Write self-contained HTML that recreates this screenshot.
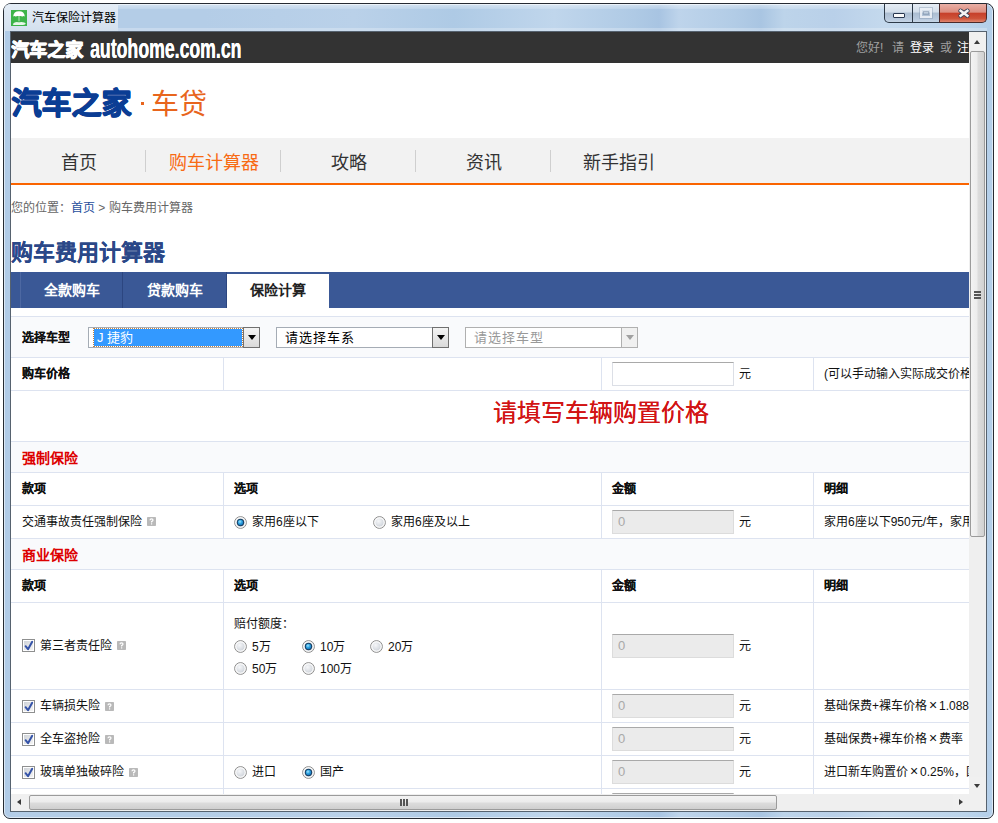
<!DOCTYPE html>
<html lang="zh-CN"><head><meta charset="utf-8">
<style>
*{box-sizing:border-box}
html,body{margin:0;padding:0}
body{width:998px;height:823px;position:relative;overflow:hidden;background:#fff;font-family:"Liberation Sans",sans-serif;font-size:12px;color:#111}
.a{position:absolute;white-space:nowrap}
#frame{position:absolute;left:3px;top:3px;width:991px;height:816px;border:1px solid #262b33;border-radius:8px 8px 7px 7px;
 background:linear-gradient(90deg,#afcae6 0px,#b4cde7 12px,#b4cde7 200px,#bad1e9 350px,#aecae5 450px,#c0d6ec 550px,#afcae5 630px,#a8c4e2 655px,#bed4eb 675px,#b2cce6 730px,#a9c5e2 757px,#bdd4ea 780px,#b9d0e9 830px,#c4d9ed 880px,#bcd4eb 960px,#b3cee9 991px);overflow:hidden}
#glow{position:absolute;left:4px;top:4px;width:114px;height:27px;background:linear-gradient(#e4edf6 0,#dae5f1 60%,#d3e0ee 100%);border-radius:6px 0 0 0}
#tbhl{position:absolute;left:118px;top:4px;width:869px;height:5px;background:linear-gradient(rgba(255,255,255,.45),rgba(255,255,255,.15))}
#tbhl2{position:absolute;left:118px;top:28px;width:869px;height:3px;background:rgba(255,255,255,.25)}
#frame .hl{position:absolute;left:0;top:0;right:0;bottom:0;border:1px solid rgba(255,255,255,.55);border-radius:7px 7px 6px 6px}
#client{position:absolute;left:10px;top:31px;width:977px;height:781px;border:1px solid #56626f;background:#fff}
#vp{position:absolute;left:11px;top:32px;width:958px;height:762px;overflow:hidden;background:#fff}
#pg{position:absolute;left:-11px;top:-32px;width:1200px;height:900px}
#vsb{position:absolute;left:969px;top:32px;width:17px;height:762px;background:#efefef}
#hsb{position:absolute;left:11px;top:794px;width:958px;height:17px;background:#efefef}
#corner{position:absolute;left:969px;top:794px;width:17px;height:17px;background:#f0f0f0}
.hl1{background:#f9fafc}
.ln{position:absolute;height:1px;background:#dde3f0}
.vl{position:absolute;width:1px;background:#dde3f0}
.b{font-weight:bold;text-shadow:.3px 0 0 currentColor}
.red{color:#d40000}
.q{position:absolute;width:9px;height:9px;background:#bdbdbd;border-radius:1px;color:#fff;font-size:8px;line-height:9px;text-align:center;font-weight:bold}
.rd{position:absolute;width:13px;height:13px;border-radius:50%;border:1px solid #8e8f8f;background:radial-gradient(circle at 50% 40%,#fbfbfb 0,#e6e6e6 70%,#d8d8d8 100%)}
.rd.on:after{content:"";position:absolute;left:2px;top:2px;width:7px;height:7px;border-radius:50%;background:radial-gradient(circle at 45% 40%,#8fd4ff 0,#1b86d6 45%,#0d4a8a 100%)}
.rd2{position:absolute;width:13px;height:13px;line-height:0}
.rd2 svg{display:block}
.cb{position:absolute;width:13px;height:13px;border:1px solid #8e8f8f;background:linear-gradient(#e2e2e2,#f6f6f6)}
.inp{position:absolute;width:122px;height:24px;border:1px solid #dcdcdc;border-top-color:#a9a9a9;background:#ebebeb;color:#a9a9a9;font-size:13px;line-height:22px;padding-left:5px}
.sel{height:21px;border:1px solid #a5acb5;background:#fff;border-right:none}
.sel .dd{position:absolute;right:0;top:-1px;width:17px;height:21px;border:1px solid #707070;background:linear-gradient(#f4f4f4,#dadada)}
.sel .dd:after{content:"";position:absolute;left:4px;top:7px;border-left:4px solid transparent;border-right:4px solid transparent;border-top:5px solid #000}
.sel.dis{border-color:#b0b0b0}
.sel.dis .dd{border-color:#b0b0b0;background:#f0f0f0}
.sel.dis .dd:after{border-top-color:#a0a0a0}
.sel.dis .seltx{color:#999}
.selhl{position:absolute;left:5px;top:1px;width:148px;height:17px;background:#3399ff;color:#fff;line-height:17px;padding-left:3px;font-size:13px;outline:1px dotted #c08040}
.seltx{position:absolute;left:8px;top:0;line-height:19px;font-size:13px;color:#000;letter-spacing:1px}
.inpw{position:absolute;width:122px;height:24px;border:1px solid #dcdfe6;border-top-color:#a9a9a9;background:#fff}

.cb.on:after{content:"";position:absolute;left:3px;top:0px;width:4px;height:8px;border-right:2px solid #2c55b8;border-bottom:2px solid #2c55b8;transform:rotate(40deg);transform-origin:50% 50%}
.wb{position:absolute;top:4px;height:19px;border:1px solid #2d3a48;border-top:none}
.wmin{left:884px;width:29px;border-radius:0 0 0 5px;background:linear-gradient(#e6edf5 0,#d3deea 45%,#abbdd1 50%,#b9cade 85%,#c7d6e6 100%)}
.wmax{left:912px;width:28px;background:linear-gradient(#e6edf5 0,#d3deea 45%,#abbdd1 50%,#b9cade 85%,#c7d6e6 100%)}
.wcls{left:939px;width:48px;border-radius:0 0 5px 0;background:linear-gradient(#eab0a6 0,#dc8e80 45%,#c7402a 52%,#cd5238 80%,#e08670 100%);border-color:#4b2a2a}
#vsb .arr,#hsb .arr{position:absolute;width:0;height:0}
.thumbv{position:absolute;left:1px;top:19px;width:15px;height:486px;border:1px solid #9b9b9b;border-radius:2px;background:linear-gradient(90deg,#f3f3f3 0,#ececec 45%,#dcdcdc 55%,#d2d2d2 100%)}
.thumbh{position:absolute;left:18px;top:1px;width:748px;height:15px;border:1px solid #9b9b9b;border-radius:2px;background:linear-gradient(#f3f3f3 0,#ececec 45%,#dcdcdc 55%,#cfcfcf 100%)}
</style></head><body>
<svg width="0" height="0" style="position:absolute"><defs>
<linearGradient id="rg" x1="0" y1="0" x2="1" y2="1"><stop offset="0" stop-color="#f4f4f4"/><stop offset="1" stop-color="#e8e8e8"/></linearGradient>
<radialGradient id="rg2" cx=".4" cy=".35" r=".7"><stop offset="0" stop-color="#f6f7f9"/><stop offset="1" stop-color="#ccd1d8"/></radialGradient>
<radialGradient id="rg3" cx=".4" cy=".35" r=".7"><stop offset="0" stop-color="#a4e4ff"/><stop offset=".5" stop-color="#2fa4e0"/><stop offset="1" stop-color="#1670b8"/></radialGradient>
<linearGradient id="cg" x1="0" y1="0" x2="1" y2="1"><stop offset="0" stop-color="#cfd3d8"/><stop offset="1" stop-color="#f4f4f4"/></linearGradient>
</defs></svg>
<div id="frame"><div class="hl"></div></div>
<div id="glow"></div><div id="tbhl"></div><div id="tbhl2"></div>
<div class="wb wmin"><div class="a" style="left:8px;top:9px;width:12px;height:5px;border:1px solid #2a3850;background:#fafafa;border-radius:1px"></div></div>
<div class="wb wmax"><div class="a" style="left:7px;top:4px;width:12px;height:10px;border:2px solid rgba(235,240,246,.9);box-shadow:0 0 0 1px rgba(120,140,165,.35)"><div class="a" style="left:1px;top:1px;width:6px;height:4px;border:1px solid rgba(120,140,165,.5)"></div></div></div>
<div class="wb wcls"><svg class="a" style="left:18px;top:4px" width="12" height="11" viewBox="0 0 12 11"><path d="M2.6 2.8 L9.4 7.8 M9.4 2.8 L2.6 7.8" stroke="#3a4258" stroke-width="4.4" stroke-linecap="round"/><path d="M2.6 2.8 L9.4 7.8 M9.4 2.8 L2.6 7.8" stroke="#f4f4f4" stroke-width="2.5" stroke-linecap="square"/></svg></div>
<!-- title icon -->
<svg class="a" style="left:11px;top:10px" width="16" height="16" viewBox="0 0 16 16"><rect width="16" height="16" fill="#3db44a"/><path d="M2.2 6.4 Q2.6 1.4 8 1.3 Q13.4 1.4 13.8 6.4 Q12.6 5.8 11.4 6.5 Q10 5.8 8 6.2 Q6 5.8 4.6 6.5 Q3.4 5.8 2.2 6.4Z" fill="#fff"/><rect x="7.3" y="6.3" width="1.4" height="5" fill="#8fd494"/><path d="M1.8 14.6 Q2.6 12 6 11.9 Q8 12.6 10 11.9 Q14 11.8 14.8 13.6 Q14.6 15 12 15 L3 15 Q1.8 15 1.8 14.6Z" fill="#e8f6e9"/></svg>
<div class="a" style="left:32px;top:10px;font-size:12px;color:#000;line-height:16px">汽车保险计算器</div>
<div id="client"></div>
<div id="vp"><div id="pg">
 <!-- dark top bar -->
 <div class="a" style="left:11px;top:32px;width:1100px;height:31px;background:#333"></div>
 <div class="a b" style="left:11px;top:38px;font-size:18px;line-height:24px;color:#fff;text-shadow:.5px 0 0 #fff,-.5px 0 0 #fff,0 .5px 0 #fff">汽车之家</div>
 <div class="a b" style="left:90px;top:35px;font-size:27px;line-height:28px;color:#fff;transform:scaleX(.655);transform-origin:0 0;text-shadow:.4px 0 0 #fff">autohome.com.cn</div>
 <div class="a" style="left:856px;top:41px;font-size:12px;line-height:14px;color:#a0a0a0">您好!</div><div class="a" style="left:892px;top:41px;font-size:12px;line-height:14px;color:#a0a0a0">请</div><div class="a" style="left:910px;top:41px;font-size:12px;line-height:14px;color:#fff">登录</div><div class="a" style="left:940px;top:41px;font-size:12px;line-height:14px;color:#a0a0a0">或</div><div class="a" style="left:957px;top:41px;font-size:12px;line-height:14px;color:#fff">注册</div>
 <!-- logo -->
 <div class="a" style="left:11px;top:85px;font-size:30px;line-height:36px;color:#0b3d94;font-weight:bold;letter-spacing:0;text-shadow:1px 0 0 #0b3d94,.5px .6px 0 #0b3d94,0 .8px 0 #0b3d94,1px .8px 0 #0b3d94">汽车之家</div>
 <div class="a" style="left:141px;top:102px;width:3px;height:3px;background:#e8651d"></div>
 <div class="a" style="left:151px;top:88px;font-size:28px;line-height:34px;color:#e8651d">车贷</div>
 <!-- nav -->
 <div class="a" style="left:11px;top:138px;width:1100px;height:45px;background:#f2f2f2"></div>
 <div class="a" style="left:11px;top:183px;width:1100px;height:2px;background:#fa6400"></div>
 <div class="a" style="left:11px;top:150px;width:135px;text-align:center;font-size:18px;line-height:26px;color:#333">首页</div>
 <div class="a" style="left:146px;top:150px;width:135px;text-align:center;font-size:18px;line-height:26px;color:#f86b14">购车计算器</div>
 <div class="a" style="left:281px;top:150px;width:135px;text-align:center;font-size:18px;line-height:26px;color:#333">攻略</div>
 <div class="a" style="left:416px;top:150px;width:135px;text-align:center;font-size:18px;line-height:26px;color:#333">资讯</div>
 <div class="a" style="left:551px;top:150px;width:135px;text-align:center;font-size:18px;line-height:26px;color:#333">新手指引</div>
 <div class="a" style="left:145px;top:150px;width:1px;height:22px;background:#cfcfcf"></div>
 <div class="a" style="left:280px;top:150px;width:1px;height:22px;background:#cfcfcf"></div>
 <div class="a" style="left:415px;top:150px;width:1px;height:22px;background:#cfcfcf"></div>
 <div class="a" style="left:550px;top:150px;width:1px;height:22px;background:#cfcfcf"></div>
 <!-- breadcrumb -->
 <div class="a" style="left:11px;top:201px;font-size:12px;line-height:14px;color:#666">您的位置：<span style="color:#1f4e9c">首页</span> &gt; 购车费用计算器</div>
 <!-- title -->
 <div class="a b" style="left:11px;top:238px;font-size:22px;line-height:30px;color:#2b4888">购车费用计算器</div>
 <!-- tabs -->
 <div class="a" style="left:11px;top:272px;width:1100px;height:36px;background:#3a5896"></div>
 <div class="a" style="left:20px;top:272px;width:1px;height:36px;background:#4d68a2"></div>
 <div class="a" style="left:122px;top:272px;width:1px;height:36px;background:#2c4680"></div>
 <div class="a" style="left:226px;top:272px;width:1px;height:36px;background:#2c4680"></div>
 <div class="a" style="left:227px;top:274px;width:102px;height:34px;background:#fff"></div>
 <div class="a b" style="left:21px;top:281px;width:101px;text-align:center;font-size:14px;line-height:18px;color:#fff;text-shadow:none">全款购车</div>
 <div class="a b" style="left:123px;top:281px;width:103px;text-align:center;font-size:14px;line-height:18px;color:#fff;text-shadow:none">贷款购车</div>
 <div class="a b" style="left:227px;top:281px;width:102px;text-align:center;font-size:14px;line-height:18px;color:#222;text-shadow:none">保险计算</div>

 <!-- table -->
 <div class="a hl1" style="left:11px;top:317px;width:1100px;height:40px"></div>
 <div class="a hl1" style="left:11px;top:442px;width:1100px;height:30px"></div>
 <div class="a hl1" style="left:11px;top:539px;width:1100px;height:30px"></div>
 <div class="ln" style="left:11px;top:316px;width:1100px"></div>
 <div class="ln" style="left:11px;top:357px;width:1100px"></div>
 <div class="ln" style="left:11px;top:390px;width:1100px"></div>
 <div class="ln" style="left:11px;top:441px;width:1100px"></div>
 <div class="ln" style="left:11px;top:472px;width:1100px"></div>
 <div class="ln" style="left:11px;top:505px;width:1100px"></div>
 <div class="ln" style="left:11px;top:538px;width:1100px"></div>
 <div class="ln" style="left:11px;top:569px;width:1100px"></div>
 <div class="ln" style="left:11px;top:602px;width:1100px"></div>
 <div class="ln" style="left:11px;top:689px;width:1100px"></div>
 <div class="ln" style="left:11px;top:722px;width:1100px"></div>
 <div class="ln" style="left:11px;top:755px;width:1100px"></div>
 <div class="ln" style="left:11px;top:788px;width:1100px"></div>
 <div class="vl" style="left:223px;top:357px;height:33px"></div>
 <div class="vl" style="left:601px;top:357px;height:33px"></div>
 <div class="vl" style="left:813px;top:357px;height:33px"></div>
 <div class="vl" style="left:223px;top:472px;height:66px"></div>
 <div class="vl" style="left:601px;top:472px;height:66px"></div>
 <div class="vl" style="left:813px;top:472px;height:66px"></div>
 <div class="vl" style="left:223px;top:569px;height:331px"></div>
 <div class="vl" style="left:601px;top:569px;height:331px"></div>
 <div class="vl" style="left:813px;top:569px;height:331px"></div>
 <div class="a b" style="left:22px;top:318px;height:40px;line-height:40px;">选择车型</div>
 <div class="a sel" style="left:88px;top:327px;width:172px"><div class="selhl">J 捷豹</div><div class="dd"></div></div>
 <div class="a sel" style="left:276px;top:327px;width:173px"><div class="seltx">请选择车系</div><div class="dd"></div></div>
 <div class="a sel dis" style="left:465px;top:327px;width:173px"><div class="seltx">请选择车型</div><div class="dd"></div></div>
 <div class="a b" style="left:22px;top:358px;height:33px;line-height:33px;">购车价格</div>
 <div class="a inpw" style="left:612px;top:362px"></div>
 <div class="a " style="left:739px;top:358px;height:33px;line-height:33px;">元</div>
 <div class="a " style="left:824px;top:358px;height:33px;line-height:33px;">(可以手动输入实际成交价格)</div>
 <div class="a red" style="left:493px;top:398px;font-size:24px;line-height:30px;font-family:'Liberation Serif',serif;color:#d21414;text-shadow:.3px 0 0 #d21414">请填写车辆购置价格</div>
 <div class="a red b" style="left:22px;top:443px;height:30px;line-height:30px;font-size:14px;text-shadow:none;color:#d00">强制保险</div>
 <div class="a b" style="left:22px;top:473px;height:33px;line-height:33px;">款项</div>
 <div class="a b" style="left:234px;top:473px;height:33px;line-height:33px;">选项</div>
 <div class="a b" style="left:612px;top:473px;height:33px;line-height:33px;">金额</div>
 <div class="a b" style="left:824px;top:473px;height:33px;line-height:33px;">明细</div>
 <div class="a b" style="left:22px;top:570px;height:33px;line-height:33px;">款项</div>
 <div class="a b" style="left:234px;top:570px;height:33px;line-height:33px;">选项</div>
 <div class="a b" style="left:612px;top:570px;height:33px;line-height:33px;">金额</div>
 <div class="a b" style="left:824px;top:570px;height:33px;line-height:33px;">明细</div>
 <div class="a " style="left:22px;top:506px;height:33px;line-height:33px;">交通事故责任强制保险</div>
 <div class="q" style="left:147px;top:517px"><svg width="9" height="9" viewBox="0 0 9 9" style="display:block"><rect width="9" height="9" rx="1.8" fill="#b9b9b9"/><path d="M3 3.3 Q3 1.9 4.5 1.9 Q6 1.9 6 3.1 Q6 4 4.6 4.6 L4.6 5.5" fill="none" stroke="#fff" stroke-width="1.2"/><rect x="4" y="6.3" width="1.2" height="1.2" fill="#fff"/></svg></div>
 <div class="rd2" style="left:234px;top:516px"><svg width="13" height="13" viewBox="0 0 13 13"><defs></defs><circle cx="6.5" cy="6.5" r="5.9" fill="url(#rg)" stroke="#8f8f8f" stroke-width="1"/><circle cx="6.5" cy="6.5" r="4.6" fill="url(#rg2)" stroke="#fff" stroke-width=".9"/><circle cx="6.5" cy="6.5" r="3.7" fill="#173f63"/><circle cx="6.5" cy="6.5" r="2.7" fill="url(#rg3)"/></svg></div>
 <div class="a " style="left:252px;top:506px;height:33px;line-height:33px;">家用6座以下</div>
 <div class="rd2" style="left:373px;top:516px"><svg width="13" height="13" viewBox="0 0 13 13"><defs></defs><circle cx="6.5" cy="6.5" r="5.9" fill="url(#rg)" stroke="#8f8f8f" stroke-width="1"/><circle cx="6.5" cy="6.5" r="4.6" fill="url(#rg2)" stroke="#fff" stroke-width=".9"/></svg></div>
 <div class="a " style="left:391px;top:506px;height:33px;line-height:33px;">家用6座及以上</div>
 <div class="inp" style="left:612px;top:510px">0</div>
 <div class="a " style="left:739px;top:506px;height:33px;line-height:33px;">元</div>
 <div class="a " style="left:824px;top:506px;height:33px;line-height:33px;">家用6座以下950元/年，家用6座及以上1100元/年</div>
 <div class="a red b" style="left:22px;top:540px;height:30px;line-height:30px;font-size:14px;text-shadow:none;color:#d00">商业保险</div>
 <div class="rd2" style="left:22px;top:639px"><svg width="13" height="13" viewBox="0 0 13 13"><rect x=".5" y=".5" width="12" height="12" fill="#fff" stroke="#8e8f8f"/><rect x="2" y="2" width="9" height="9" fill="url(#cg)"/><path d="M3.6 7.2 L6 10.2 L10.2 2.8" fill="none" stroke="#3553a8" stroke-width="2" stroke-linejoin="round" stroke-linecap="round"/></svg></div>
 <div class="a " style="left:40px;top:603px;height:87px;line-height:87px;">第三者责任险</div>
 <div class="q" style="left:117px;top:641px"><svg width="9" height="9" viewBox="0 0 9 9" style="display:block"><rect width="9" height="9" rx="1.8" fill="#b9b9b9"/><path d="M3 3.3 Q3 1.9 4.5 1.9 Q6 1.9 6 3.1 Q6 4 4.6 4.6 L4.6 5.5" fill="none" stroke="#fff" stroke-width="1.2"/><rect x="4" y="6.3" width="1.2" height="1.2" fill="#fff"/></svg></div>
 <div class="a " style="left:234px;top:613px;height:22px;line-height:22px;">赔付额度：</div>
 <div class="rd2" style="left:234px;top:640px"><svg width="13" height="13" viewBox="0 0 13 13"><defs></defs><circle cx="6.5" cy="6.5" r="5.9" fill="url(#rg)" stroke="#8f8f8f" stroke-width="1"/><circle cx="6.5" cy="6.5" r="4.6" fill="url(#rg2)" stroke="#fff" stroke-width=".9"/></svg></div>
 <div class="a " style="left:252px;top:636px;height:23px;line-height:23px;">5万</div>
 <div class="rd2" style="left:302px;top:640px"><svg width="13" height="13" viewBox="0 0 13 13"><defs></defs><circle cx="6.5" cy="6.5" r="5.9" fill="url(#rg)" stroke="#8f8f8f" stroke-width="1"/><circle cx="6.5" cy="6.5" r="4.6" fill="url(#rg2)" stroke="#fff" stroke-width=".9"/><circle cx="6.5" cy="6.5" r="3.7" fill="#173f63"/><circle cx="6.5" cy="6.5" r="2.7" fill="url(#rg3)"/></svg></div>
 <div class="a " style="left:320px;top:636px;height:23px;line-height:23px;">10万</div>
 <div class="rd2" style="left:370px;top:640px"><svg width="13" height="13" viewBox="0 0 13 13"><defs></defs><circle cx="6.5" cy="6.5" r="5.9" fill="url(#rg)" stroke="#8f8f8f" stroke-width="1"/><circle cx="6.5" cy="6.5" r="4.6" fill="url(#rg2)" stroke="#fff" stroke-width=".9"/></svg></div>
 <div class="a " style="left:388px;top:636px;height:23px;line-height:23px;">20万</div>
 <div class="rd2" style="left:234px;top:662px"><svg width="13" height="13" viewBox="0 0 13 13"><defs></defs><circle cx="6.5" cy="6.5" r="5.9" fill="url(#rg)" stroke="#8f8f8f" stroke-width="1"/><circle cx="6.5" cy="6.5" r="4.6" fill="url(#rg2)" stroke="#fff" stroke-width=".9"/></svg></div>
 <div class="a " style="left:252px;top:658px;height:23px;line-height:23px;">50万</div>
 <div class="rd2" style="left:302px;top:662px"><svg width="13" height="13" viewBox="0 0 13 13"><defs></defs><circle cx="6.5" cy="6.5" r="5.9" fill="url(#rg)" stroke="#8f8f8f" stroke-width="1"/><circle cx="6.5" cy="6.5" r="4.6" fill="url(#rg2)" stroke="#fff" stroke-width=".9"/></svg></div>
 <div class="a " style="left:320px;top:658px;height:23px;line-height:23px;">100万</div>
 <div class="inp" style="left:612px;top:634px">0</div>
 <div class="a " style="left:739px;top:603px;height:87px;line-height:87px;">元</div>
 <div class="rd2" style="left:22px;top:700px"><svg width="13" height="13" viewBox="0 0 13 13"><rect x=".5" y=".5" width="12" height="12" fill="#fff" stroke="#8e8f8f"/><rect x="2" y="2" width="9" height="9" fill="url(#cg)"/><path d="M3.6 7.2 L6 10.2 L10.2 2.8" fill="none" stroke="#3553a8" stroke-width="2" stroke-linejoin="round" stroke-linecap="round"/></svg></div>
 <div class="a " style="left:40px;top:690px;height:33px;line-height:33px;">车辆损失险</div>
 <div class="q" style="left:105px;top:702px"><svg width="9" height="9" viewBox="0 0 9 9" style="display:block"><rect width="9" height="9" rx="1.8" fill="#b9b9b9"/><path d="M3 3.3 Q3 1.9 4.5 1.9 Q6 1.9 6 3.1 Q6 4 4.6 4.6 L4.6 5.5" fill="none" stroke="#fff" stroke-width="1.2"/><rect x="4" y="6.3" width="1.2" height="1.2" fill="#fff"/></svg></div>
 <div class="inp" style="left:612px;top:694px">0</div>
 <div class="a " style="left:739px;top:690px;height:33px;line-height:33px;">元</div>
 <div class="a " style="left:824px;top:690px;height:33px;line-height:33px;">基础保费+裸车价格<span style="display:inline-block;width:12px;text-align:center;font-size:14px;line-height:10px">×</span>1.0880%</div>
 <div class="rd2" style="left:22px;top:733px"><svg width="13" height="13" viewBox="0 0 13 13"><rect x=".5" y=".5" width="12" height="12" fill="#fff" stroke="#8e8f8f"/><rect x="2" y="2" width="9" height="9" fill="url(#cg)"/><path d="M3.6 7.2 L6 10.2 L10.2 2.8" fill="none" stroke="#3553a8" stroke-width="2" stroke-linejoin="round" stroke-linecap="round"/></svg></div>
 <div class="a " style="left:40px;top:723px;height:33px;line-height:33px;">全车盗抢险</div>
 <div class="q" style="left:105px;top:735px"><svg width="9" height="9" viewBox="0 0 9 9" style="display:block"><rect width="9" height="9" rx="1.8" fill="#b9b9b9"/><path d="M3 3.3 Q3 1.9 4.5 1.9 Q6 1.9 6 3.1 Q6 4 4.6 4.6 L4.6 5.5" fill="none" stroke="#fff" stroke-width="1.2"/><rect x="4" y="6.3" width="1.2" height="1.2" fill="#fff"/></svg></div>
 <div class="inp" style="left:612px;top:727px">0</div>
 <div class="a " style="left:739px;top:723px;height:33px;line-height:33px;">元</div>
 <div class="a " style="left:824px;top:723px;height:33px;line-height:33px;">基础保费+裸车价格<span style="display:inline-block;width:12px;text-align:center;font-size:14px;line-height:10px">×</span>费率</div>
 <div class="rd2" style="left:22px;top:766px"><svg width="13" height="13" viewBox="0 0 13 13"><rect x=".5" y=".5" width="12" height="12" fill="#fff" stroke="#8e8f8f"/><rect x="2" y="2" width="9" height="9" fill="url(#cg)"/><path d="M3.6 7.2 L6 10.2 L10.2 2.8" fill="none" stroke="#3553a8" stroke-width="2" stroke-linejoin="round" stroke-linecap="round"/></svg></div>
 <div class="a " style="left:40px;top:756px;height:33px;line-height:33px;">玻璃单独破碎险</div>
 <div class="q" style="left:129px;top:768px"><svg width="9" height="9" viewBox="0 0 9 9" style="display:block"><rect width="9" height="9" rx="1.8" fill="#b9b9b9"/><path d="M3 3.3 Q3 1.9 4.5 1.9 Q6 1.9 6 3.1 Q6 4 4.6 4.6 L4.6 5.5" fill="none" stroke="#fff" stroke-width="1.2"/><rect x="4" y="6.3" width="1.2" height="1.2" fill="#fff"/></svg></div>
 <div class="inp" style="left:612px;top:760px">0</div>
 <div class="a " style="left:739px;top:756px;height:33px;line-height:33px;">元</div>
 <div class="a " style="left:824px;top:756px;height:33px;line-height:33px;">进口新车购置价<span style="display:inline-block;width:12px;text-align:center;font-size:14px;line-height:10px">×</span>0.25%，国产新车购置价<span style="display:inline-block;width:12px;text-align:center;font-size:14px;line-height:10px">×</span>0.15%</div>
 <div class="rd2" style="left:234px;top:766px"><svg width="13" height="13" viewBox="0 0 13 13"><defs></defs><circle cx="6.5" cy="6.5" r="5.9" fill="url(#rg)" stroke="#8f8f8f" stroke-width="1"/><circle cx="6.5" cy="6.5" r="4.6" fill="url(#rg2)" stroke="#fff" stroke-width=".9"/></svg></div>
 <div class="a " style="left:252px;top:756px;height:33px;line-height:33px;">进口</div>
 <div class="rd2" style="left:302px;top:766px"><svg width="13" height="13" viewBox="0 0 13 13"><defs></defs><circle cx="6.5" cy="6.5" r="5.9" fill="url(#rg)" stroke="#8f8f8f" stroke-width="1"/><circle cx="6.5" cy="6.5" r="4.6" fill="url(#rg2)" stroke="#fff" stroke-width=".9"/><circle cx="6.5" cy="6.5" r="3.7" fill="#173f63"/><circle cx="6.5" cy="6.5" r="2.7" fill="url(#rg3)"/></svg></div>
 <div class="a " style="left:320px;top:756px;height:33px;line-height:33px;">国产</div>
 <div class="inp" style="left:612px;top:793px">0</div>
</div></div>
<div id="vsb"><div class="a" style="left:0;top:0;width:17px;height:18px;background:#f0f0f0"></div>
<div class="arr" style="left:5px;top:8px;border-left:3.5px solid transparent;border-right:3.5px solid transparent;border-bottom:4px solid #3a3a3a"></div>
<div class="thumbv"><div class="a" style="left:3px;top:239px;width:7px;height:2px;background:#555;box-shadow:0 3px 0 #555,0 6px 0 #555"></div></div>
<div class="a" style="left:0;top:745px;width:16px;height:17px;background:#f0f0f0"></div>
<div class="arr" style="left:5px;top:752px;border-left:3.5px solid transparent;border-right:3.5px solid transparent;border-top:4px solid #3a3a3a"></div>
</div>
<div id="hsb"><div class="a" style="left:0;top:0;width:17px;height:17px;background:#f0f0f0"></div>
<div class="arr" style="left:6px;top:5px;border-top:3.5px solid transparent;border-bottom:3.5px solid transparent;border-right:4px solid #3a3a3a"></div>
<div class="thumbh"><div class="a" style="left:370px;top:3px;width:2px;height:7px;background:#555;box-shadow:3px 0 0 #555,6px 0 0 #555"></div></div>
<div class="a" style="left:942px;top:0;width:17px;height:17px;background:#f0f0f0"></div>
<div class="arr" style="left:948px;top:5px;border-top:3.5px solid transparent;border-bottom:3.5px solid transparent;border-left:4px solid #3a3a3a"></div>
</div>
<div id="corner"></div>
</body></html>
